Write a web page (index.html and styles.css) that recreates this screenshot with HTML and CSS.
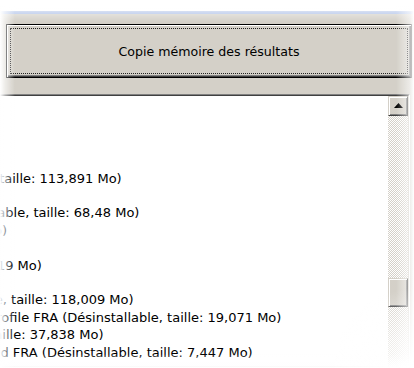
FILE: index.html
```html
<!DOCTYPE html>
<html lang="fr">
<head>
    <meta charset="UTF-8">
    <meta name="viewport" content="width=device-width, initial-scale=1.0">
    <title>Résultats de l'analyse</title>
    <link rel="stylesheet" href="styles.css">
</head>
<body>
    <div class="dialog">
        <div class="actions">
            <button class="btn btn-default" type="button">
                <span class="btn-focus">Copie mémoire des résultats</span>
            </button>
        </div>

        <div class="results">
            <div class="results-inner">
                <div class="results-text">
                    <div class="lines">
                        <div class="line">&nbsp;</div>
                        <div class="line">&nbsp;</div>
                        <div class="line">&nbsp;</div>
                        <div class="line">&nbsp;</div>
                        <div class="line">Mozilla Firefox 3.6.8 (Désinstallable, taille: 113,891 Mo)</div>
                        <div class="line">&nbsp;</div>
                        <div class="line">Windows Live Messenger (Désinstallable, taille: 68,48 Mo)</div>
                        <div class="line">Skype (Désinstallable, taille: 2,51 Mo)</div>
                        <div class="line">&nbsp;</div>
                        <div class="line">Picasa 3.9 (Désinstallable, taille: 45,19 Mo)</div>
                        <div class="line">&nbsp;</div>
                        <div class="line">Java(TM) 6 Update 22 (Désinstallable, taille: 118,009 Mo)</div>
                        <div class="line">Microsoft .NET Framework 4 Client Profile FRA (Désinstallable, taille: 19,071 Mo)</div>
                        <div class="line">Windows Live Mail (Désinstallable, taille: 37,838 Mo)</div>
                        <div class="line">Microsoft .NET Framework 4 Extended FRA (Désinstallable, taille: 7,447 Mo)</div>
                    </div>
                </div>

                <div class="scrollbar">
                    <div class="sb-btn">
                        <svg width="9" height="5" viewBox="0 0 9 5">
                            <polygon points="4.5,0 9,5 0,5" fill="#000"/>
                        </svg>
                    </div>
                    <div class="sb-track">
                        <div class="sb-btn sb-thumb"></div>
                    </div>
                </div>
            </div>
        </div>
    </div>

    <!-- soft fade round the edges of the capture -->
    <div class="vignette"></div>
</body>
</html>
```

FILE: styles.css
```css
* {
    box-sizing: border-box;
    margin: 0;
    padding: 0;
}

body {
    font-family: "DejaVu Sans", Verdana, sans-serif;
    font-size: 13px;
    color: #000;
    background-color: #fff;
    overflow: hidden;
    height: 368px;
}

.dialog {
    margin-top: 11px;
    margin-left: -10px;
    width: 434px;
    height: 357px;
    background-color: #d4d0c8;
    border-top: 3px solid #a9bde6;
}

.actions {
    padding: 10px 0 0 16px;
}

.btn {
    display: flex;
    width: 406px;
    height: 54px;
    padding: 3px;
    font: inherit;
    font-size: 12.6px;
    color: #000;
    background-color: #d4d0c8;
    border: 1px solid #000;
    box-shadow: inset 1px 1px #fff, inset -1px -1px #404040, inset -2px -2px #808080;
}

.btn-focus {
    flex: 1;
    display: flex;
    align-items: center;
    justify-content: center;
    border: 1px dotted #222;
}

.results {
    margin-top: 16px;
    width: 420px;
    height: 274px;
    border: 1px solid;
    border-color: #808080 #fff #fff #808080;
}

.results-inner {
    display: flex;
    height: 100%;
    background-color: #fff;
    border: 1px solid;
    border-color: #404040 #d4d0c8 #d4d0c8 #404040;
}

.results-text {
    flex: 1;
    overflow: hidden;
    padding-top: 4px;
}

/* list is scrolled to the right, names are cut on the left */
.lines {
    margin-left: -231px;
    white-space: nowrap;
    line-height: 17.4px;
}

.scrollbar {
    width: 20px;
    display: flex;
    flex-direction: column;
}

.sb-btn {
    display: flex;
    align-items: center;
    justify-content: center;
    width: 20px;
    height: 20px;
    background-color: #d4d0c8;
    border: 1px solid;
    border-color: #d4d0c8 #404040 #404040 #d4d0c8;
    box-shadow: inset 1px 1px #fff, inset -1px -1px #808080;
}

.sb-btn svg {
    display: block;
    margin-top: -1px;
}

.sb-track {
    flex: 1;
    background: conic-gradient(#d4d0c8 25%, #fff 0 50%, #d4d0c8 0 75%, #fff 0) 0 0 / 2px 2px;
}

.sb-thumb {
    height: 29px;
    margin-top: 162px;
}

.vignette {
    position: fixed;
    inset: 0;
    pointer-events: none;
    background:
        linear-gradient(to bottom, #fff 0, #fff 6px, rgba(255,255,255,.45) 12px, rgba(255,255,255,0) 22px),
        linear-gradient(to right, #fff 0, rgba(255,255,255,.6) 5px, rgba(255,255,255,0) 15px),
        linear-gradient(to left, #fff 0, rgba(255,255,255,.6) 4px, rgba(255,255,255,0) 18px),
        linear-gradient(to top, #fff 0, rgba(255,255,255,.6) 6px, rgba(255,255,255,0) 14px),
        radial-gradient(circle at 100% 100%, #fff 0, rgba(255,255,255,.6) 35px, rgba(255,255,255,0) 80px);
}
```
